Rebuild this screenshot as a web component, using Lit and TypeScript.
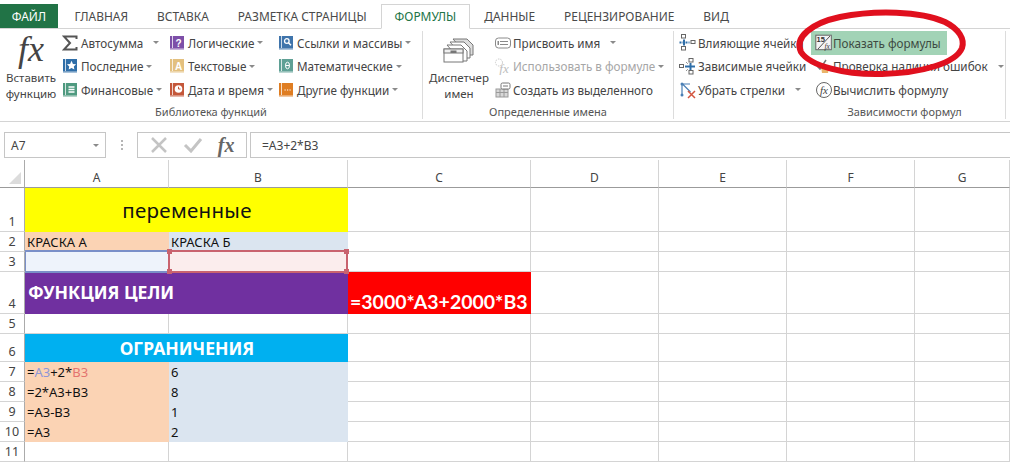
import { LitElement, html, css, svg, nothing } from "lit";
import { customElement } from "lit/decorators.js";

const book = (color: string, glyph: unknown) => html`<svg width="16" height="16" viewBox="0 0 16 16">
  <rect x="1" y="1" width="14" height="13.5" fill="${color}"/>
  <rect x="1" y="13" width="14" height="1.5" fill="#fff" opacity=".35"/>
  <rect x="3" y="1" width="1" height="12" fill="#fff" opacity=".75"/>
  ${glyph}
</svg>`;
const bookGlyph = (t: string) => svg`<text x="9.5" y="11.5" font-size="10" font-weight="700" text-anchor="middle" fill="#fff" font-family="Liberation Sans">${t}</text>`;

const icons: Record<string, unknown> = {
  sum: html`<svg width="16" height="16" viewBox="0 0 16 16"><path d="M14.5 4V1.5H2L8 8l-6 6.5h12.5V12" fill="none" stroke="#555" stroke-width="2"/></svg>`,
  star: book("#2f6ea8", svg`<path d="M9.5 3l1.5 3.2 3.3.4-2.4 2.3.6 3.3-3-1.6-3 1.6.6-3.3L4.7 6.6 8 6.2z" fill="#fff" transform="translate(.5 0) scale(.95)"/>`),
  fin: book("#4f9a80", svg`<path d="M6.5 5h6M6.5 7.5h6M6.5 10h6" stroke="#fff" stroke-width="1.3"/>`),
  q: book("#7d4fa8", bookGlyph("?")),
  a: book("#e3c07f", bookGlyph("A")),
  clock: book("#c4573a", svg`<circle cx="9.5" cy="7" r="3.8" fill="#fff"/><path d="M9.5 4.8V7h2" stroke="#c4573a" fill="none"/>`),
  find: book("#3f74ab", svg`<circle cx="8.8" cy="6" r="2.3" fill="none" stroke="#fff" stroke-width="1.3"/><path d="M10.5 7.8l2.5 2.5" stroke="#fff" stroke-width="1.5"/>`),
  theta: book("#5fa095", svg`<ellipse cx="9.5" cy="7.5" rx="2" ry="3.3" fill="none" stroke="#fff"/><path d="M7.5 7.5h4" stroke="#fff"/>`),
  more: book("#df7d22", svg`<path d="M6.5 8h1.2M9 8h1.2M11.5 8h1.2" stroke="#fff" stroke-width="1.2"/>`),
  name: html`<svg width="18" height="16" viewBox="0 0 18 16"><rect x="1.5" y="3" width="15" height="10" rx="3" fill="#fff" stroke="#8a8a8a"/><path d="M6 6.5h8M6 9.5h8" stroke="#8a8a8a"/><rect x="3.5" y="6" width="1.5" height="4" fill="#8a8a8a"/></svg>`,
  use: html`<svg width="18" height="17" viewBox="0 0 18 17"><circle cx="5" cy="4.5" r="3.5" fill="none" stroke="#c9c9c9" stroke-dasharray="1.5 1"/><text x="10" y="15" font-size="13" font-style="italic" text-anchor="middle" fill="#bdbdbd" font-family="Liberation Serif">fx</text></svg>`,
  create: html`<svg width="18" height="16" viewBox="0 0 18 16"><rect x="2" y="7" width="12" height="8" fill="#d8d8d8" stroke="#9a9a9a"/><path d="M2 10.5h12M6 7v8M10 7v8" stroke="#9a9a9a"/><rect x="7" y="1" width="9" height="6" rx="1.5" fill="#fff" stroke="#777"/><path d="M9 4h5" stroke="#777"/></svg>`,
  prec: html`<svg width="17" height="17" viewBox="0 0 17 17"><g fill="#fff" stroke="#666"><rect x="2.5" y=".5" width="4" height="3.5"/><rect x="2.5" y="12.5" width="4" height="3.5"/><rect x="12" y="6.5" width="4" height="3"/></g><path d="M.5 8.5h10" stroke="#2f6ea8" stroke-width="2" stroke-dasharray="2 1"/><path d="M5 5.5v6" stroke="#2f6ea8" stroke-width="2"/></svg>`,
  dep: html`<svg width="17" height="17" viewBox="0 0 17 17"><g fill="#fff" stroke="#666"><rect x="10" y=".5" width="4" height="3.5"/><rect x="10" y="12.5" width="4" height="3.5"/><rect x=".5" y="6.5" width="4" height="3"/></g><path d="M6 8.5h10" stroke="#2f6ea8" stroke-width="2"/><path d="M11.5 5v7" stroke="#2f6ea8" stroke-width="2"/><path d="M7 4l2 2M7 13l2-2" stroke="#666" stroke-dasharray="1 1"/></svg>`,
  rem: html`<svg width="18" height="18" viewBox="0 0 18 18"><path d="M3 3v11M3.5 3l8 8M3 3h8" fill="none" stroke="#4a7fb5" stroke-width="1.2"/><circle cx="3" cy="3" r="1.5" fill="#4a7fb5"/><circle cx="3" cy="14" r="1.5" fill="#4a7fb5"/><path d="M9 10l7 7M16 10l-7 7" stroke="#d4553f" stroke-width="1.5"/></svg>`,
  show: html`<svg width="17" height="17" viewBox="0 0 17 17"><rect x=".8" y="1.2" width="15.5" height="14.5" fill="#f4f4f4" stroke="#666"/><text x="1.5" y="8" font-size="7.5" font-weight="700" fill="#333" font-family="Liberation Sans">15</text><path d="M3 15L15 2" stroke="#555"/><text x="9.5" y="14.5" font-size="7.5" font-style="italic" fill="#333" font-family="Liberation Serif">fx</text></svg>`,
  check: html`<svg width="17" height="17" viewBox="0 0 17 17"><path d="M2 8l3 3 6-9" fill="none" stroke="#777" stroke-width="1.5"/><path d="M6 9l4-2 4 4-1 4H7z" fill="#eab46a"/></svg>`,
  evalf: html`<svg width="18" height="18" viewBox="0 0 18 18"><circle cx="9" cy="9" r="7.5" fill="#fff" stroke="#666"/><text x="9" y="13" font-size="11" font-style="italic" text-anchor="middle" fill="#444" font-family="Liberation Serif">fx</text></svg>`,
};

type Item = { icon: string; label: string; caret?: "near" | "far"; off?: boolean; hl?: boolean };
const lib: Item[][] = [
  [{ icon: "sum", label: "Автосумма", caret: "far" }, { icon: "star", label: "Последние", caret: "near" }, { icon: "fin", label: "Финансовые", caret: "near" }],
  [{ icon: "q", label: "Логические", caret: "near" }, { icon: "a", label: "Текстовые", caret: "near" }, { icon: "clock", label: "Дата и время", caret: "near" }],
  [{ icon: "find", label: "Ссылки и массивы", caret: "near" }, { icon: "theta", label: "Математические", caret: "near" }, { icon: "more", label: "Другие функции", caret: "near" }],
];
const names: Item[] = [
  { icon: "name", label: "Присвоить имя", caret: "far" },
  { icon: "use", label: "Использовать в формуле", caret: "near", off: true },
  { icon: "create", label: "Создать из выделенного" },
];
const deps: Item[][] = [
  [{ icon: "prec", label: "Влияющие ячейки" }, { icon: "dep", label: "Зависимые ячейки" }, { icon: "rem", label: "Убрать стрелки", caret: "far" }],
  [{ icon: "show", label: "Показать формулы", hl: true }, { icon: "check", label: "Проверка наличия ошибок", caret: "far" }, { icon: "evalf", label: "Вычислить формулу" }],
];
const tabs = ["ГЛАВНАЯ", "ВСТАВКА", "РАЗМЕТКА СТРАНИЦЫ", "ФОРМУЛЫ", "ДАННЫЕ", "РЕЦЕНЗИРОВАНИЕ", "ВИД"];
const cols = ["A", "B", "C", "D", "E", "F", "G"];

const caret = html`<svg class="caretsvg" width="6" height="3" viewBox="0 0 6 3"><path d="M0 0h6L3 3z" fill="#8a8a8a"/></svg>`;

@customElement("app-root")
export class AppRoot extends LitElement {
  static styles = css`
    :host { display: block; width: 1010px; height: 462px; overflow: hidden; position: relative; background: #fff;
      font-family: "Noto Sans", "Open Sans", sans-serif; color: #444; }
    * { box-sizing: border-box; }

    .tabs { display: flex; height: 29px; padding-top: 4px; border-bottom: 1px solid #d4d4d4; font-size: 11.95px; }
    .tab { padding: 0 14.5px; display: flex; align-items: center; height: 25px; white-space: nowrap; color: #4a4a4a; }
    .tab.file { background: #217346; color: #fff; width: 58px; height: 24px; padding: 0; justify-content: center; margin-right: 2px; }
    .tab.on { border: 1px solid #d4d4d4; border-bottom: 1px solid #fff; color: #217346; padding: 0 12.5px; }

    .ribbon { display: flex; height: 93px; border-bottom: 1px solid #d4d4d4; font-size: 11.7px; }
    .group { display: flex; flex-direction: column; border-right: 1px solid #dcdcdc; margin: 2px 0; }
    .g1 { width: 423px; } .g2 { width: 251px; } .g3 { width: 332px; }
    .grow { display: flex; height: 72px; }
    .glabel { flex: 1; text-align: center; font-size: 11px; line-height: 14px; padding-top: 2px; color: #555; }
    .g3 .glabel { padding-left: 130px; }
    .big { display: flex; flex-direction: column; align-items: center; text-align: center; line-height: 16px; flex: none; white-space: nowrap; font-size: 11.5px; }
    .big.fx { width: 62px; }
    .big.disp { width: 68px; margin-left: 2px; margin-right: 1px; }
    .fxglyph { font-family: "Liberation Serif", serif; font-style: italic; font-size: 36px; line-height: 36px; height: 39px; color: #444; }
    .drawer { height: 39px; display: flex; align-items: center; }
    .col { display: flex; flex-direction: column; flex: none; }
    .c1 { width: 107px; } .c2 { width: 109px; } .c3 { width: 120px; }
    .cn { width: 178px; } .cd1 { width: 132px; margin-left: 5px; } .cd2 { width: 190px; }
    .item { display: flex; align-items: center; height: 23.5px; white-space: nowrap; }
    .icon { width: 19px; flex: none; display: flex; align-items: center; }
    .cd2 .icon { width: 22px; padding-left: 4px; }
    .item.off { color: #a6a6a6; }
    .item.hl { background: #a2d3b6; width: 136px; color: #3d4a42; }
    .caretsvg { flex: none; display: block; }
    .near { margin-left: 3px; }
    .far { margin-left: 10px; }

    .fbar { display: flex; align-items: stretch; height: 26px; margin: 10px 0 2px 4px; font-size: 12px; }
    .namebox { width: 102px; border: 1px solid #c6c6c6; display: flex; align-items: center; justify-content: space-between; padding: 0 6px; }
    .dots { width: 31px; display: flex; flex-direction: column; align-items: center; justify-content: center; gap: 2px; }
    .dots i { width: 2px; height: 2px; background: #b5b5b5; }
    .btns { width: 110px; border: 1px solid #c6c6c6; display: flex; align-items: center; justify-content: space-around; padding: 0 4px; margin-right: 3px; }
    .btnfx { font-family: "Liberation Serif", serif; font-style: italic; font-weight: 700; font-size: 20px; color: #666; }
    .input { flex: 1; border: 1px solid #c6c6c6; border-right: none; display: flex; align-items: center; padding-left: 11px; }

    .sheet { display: grid;
      grid-template-columns: 25px 144px 179px 183px 128px 128px 128px 95px;
      grid-template-rows: 28px 44px 20px 20px 42px 20px 28px 20px 20px 20px 20px 20px;
      font-family: "Noto Sans", sans-serif; color: #111; }
    .corner { border-right: 1px solid #ababab; border-bottom: 1px solid #9b9b9b; display: flex; align-items: flex-end; justify-content: flex-end; padding: 0 3px 3px 0; }
    .ch { border-right: 1px solid #d4d4d4; border-bottom: 1px solid #9b9b9b; text-align: center; font-size: 12px; color: #444; line-height: 1; padding-top: 12px; }
    .rh { border-right: 1px solid #ababab; border-bottom: 1px solid #d4d4d4; text-align: center; font-size: 12.5px; color: #444; display: flex; align-items: flex-end; justify-content: center; line-height: 18px; }
    .cell { border-right: 1px solid #d4d4d4; border-bottom: 1px solid #d4d4d4; padding-left: 2px; display: flex; align-items: flex-end; white-space: nowrap; position: relative; line-height: 18px; font-size: 13px; }
    .fill { border-color: transparent; }
    .span2 { grid-column: span 2; }
    .yellow { background: #ffff00; justify-content: center; align-items: center; font-size: 20.5px; color: #111; letter-spacing: .3px; }
    .peach { background: #fbd3b4; }
    .sky { background: #dbe5f0; }
    .purple { background: #7030a0; color: #fff; font-weight: 700; font-size: 17.5px; align-items: center; padding: 0 0 2px 3px; }
    .cyan { background: #00b0f0; color: #fff; font-weight: 700; font-size: 17.5px; justify-content: center; align-items: center; }
    .red { background: #ff0000; color: #fff; font-weight: 700; font-size: 19.5px; padding-left: 2px; font-family: "Liberation Sans Narrow", "Lato", sans-serif; line-height: 22px; }
    .a3 { background: #eef3fb; }
    .b3 { background: #fbeded; }
    .selA { position: absolute; z-index: 2; inset: -2px -1px -2px 0; border-top: 2px solid #7a8fc8; border-bottom: 2px solid #7a8fc8; border-left: 1px solid #7a8fc8; }
    .selB { position: absolute; z-index: 2; inset: -2px -1px -2px -1px; border: 2px solid #c9636f; }
    .h { position: absolute; width: 5px; height: 5px; background: #c9636f; z-index: 3; }
    .h.tl { left: -3px; top: -3px; } .h.tr { right: -3px; top: -3px; } .h.bl { left: -3px; bottom: -3px; } .h.br { right: -3px; bottom: -3px; }
    .ra { color: #8d96d8; } .rb { color: #e4746f; }

    .ellipse { position: absolute; left: 790px; top: 5px; pointer-events: none; }
  `;

  private itemT(i: Item) {
    return html`<div class="item ${i.off ? "off" : ""} ${i.hl ? "hl" : ""}">
      <span class="icon">${icons[i.icon]}</span><span>${i.label}</span>
      ${i.caret ? html`<span class="${i.caret}">${caret}</span>` : nothing}
    </div>`;
  }

  private cellsFor(r: number) {
    const blank = (n: number) => Array.from({ length: n }, () => html`<div class="cell"></div>`);
    const pair = (a: unknown, b: unknown) => html`<div class="cell fill peach">${a}</div><div class="cell fill sky">${b}</div>`;
    switch (r) {
      case 1: return [html`<div class="cell fill span2 yellow">переменные</div>`, ...blank(5)];
      case 2: return [pair("КРАСКА А", "КРАСКА Б"), ...blank(5)];
      case 3: return [
        html`<div class="cell a3"><div class="selA"></div></div>`,
        html`<div class="cell b3"><div class="selB"><i class="h tl"></i><i class="h tr"></i><i class="h bl"></i><i class="h br"></i></div></div>`,
        ...blank(5)];
      case 4: return [html`<div class="cell fill span2 purple">ФУНКЦИЯ ЦЕЛИ</div>`, html`<div class="cell fill red">=3000*А3+2000*В3</div>`, ...blank(4)];
      case 6: return [html`<div class="cell fill span2 cyan">ОГРАНИЧЕНИЯ</div>`, ...blank(5)];
      case 7: return [pair(html`<span>=<span class="ra">A3</span>+2*<span class="rb">B3</span></span>`, "6"), ...blank(5)];
      case 8: return [pair("=2*A3+B3", "8"), ...blank(5)];
      case 9: return [pair("=A3-B3", "1"), ...blank(5)];
      case 10: return [pair("=A3", "2"), ...blank(5)];
      default: return blank(7);
    }
  }

  render() {
    return html`
      <div class="tabs">
        <div class="tab file">ФАЙЛ</div>
        ${tabs.map((t) => html`<div class="tab ${t === "ФОРМУЛЫ" ? "on" : ""}">${t}</div>`)}
      </div>
      <div class="ribbon">
        <div class="group g1">
          <div class="grow">
            <div class="big fx"><div class="fxglyph">fx</div><div>Вставить</div><div>функцию</div></div>
            <div class="col c1">${lib[0].map((i) => this.itemT(i))}</div>
            <div class="col c2">${lib[1].map((i) => this.itemT(i))}</div>
            <div class="col c3">${lib[2].map((i) => this.itemT(i))}</div>
          </div>
          <div class="glabel">Библиотека функций</div>
        </div>
        <div class="group g2">
          <div class="grow">
            <div class="big disp">
              <div class="drawer"><svg width="34" height="30" viewBox="0 0 34 30" fill="#fff" stroke="#777">
                <path d="M11 3h14l6 6v10H25z" fill="#ddd"/><path d="M8 6h14l6 6v10H22z"/><path d="M5 9h14l6 6v10H19z"/>
                <rect x="2" y="13" width="19" height="13"/><rect x="2" y="13" width="19" height="4" fill="#f0f0f0"/><rect x="9" y="15" width="5" height="1.5" fill="#777"/></svg></div>
              <div>Диспетчер</div><div>имен</div>
            </div>
            <div class="col cn">${names.map((i) => this.itemT(i))}</div>
          </div>
          <div class="glabel">Определенные имена</div>
        </div>
        <div class="group g3">
          <div class="grow">
            <div class="col cd1">${deps[0].map((i) => this.itemT(i))}</div>
            <div class="col cd2">${deps[1].map((i) => this.itemT(i))}</div>
          </div>
          <div class="glabel">Зависимости формул</div>
        </div>
      </div>
      <div class="fbar">
        <div class="namebox"><span>A7</span>${caret}</div>
        <div class="dots"><i></i><i></i><i></i></div>
        <div class="btns">
          <svg width="18" height="16" viewBox="0 0 18 16"><path d="M2 1l14 14M16 1L2 15" stroke="#c4c4c4" stroke-width="2.5"/></svg>
          <svg width="20" height="16" viewBox="0 0 20 16"><path d="M2 8l6 6L18 2" fill="none" stroke="#c4c4c4" stroke-width="3"/></svg>
          <span class="btnfx">fx</span>
        </div>
        <div class="input">=A3+2*B3</div>
      </div>
      <div class="sheet">
        <div class="corner"><svg width="12" height="12" viewBox="0 0 12 12"><path d="M12 0v12H0z" fill="#dcdcdc"/></svg></div>
        ${cols.map((c) => html`<div class="ch">${c}</div>`)}
        ${Array.from({ length: 11 }, (_, k) => html`<div class="rh">${k + 1}</div>${this.cellsFor(k + 1)}`)}
      </div>
      <svg class="ellipse" width="182" height="76" viewBox="0 0 182 76">
        <path d="M50 12C85 5 130 6 155 17c14 7 20 17 17 26-6 15-40 25-80 26C55 70 20 61 11 47 4 32 22 18 50 12z" fill="none" stroke="#e0101e" stroke-width="6"/>
      </svg>
    `;
  }
}
